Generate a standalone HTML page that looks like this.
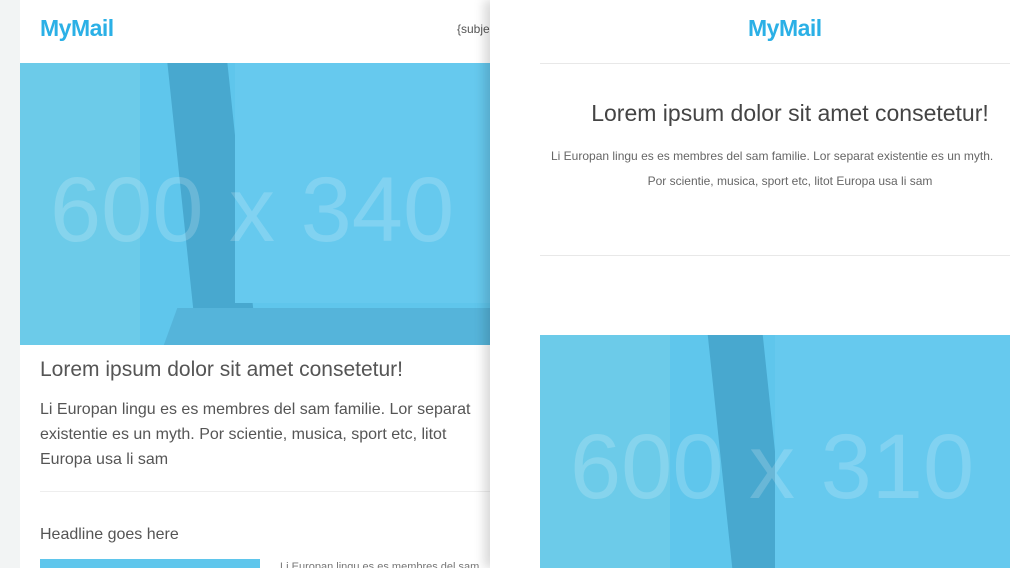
<!DOCTYPE html>
<html><head><meta charset="utf-8"><style>
*{margin:0;padding:0;box-sizing:border-box}
html,body{width:1010px;height:568px;overflow:hidden}
body{background:#f2f4f4;font-family:"Liberation Sans",sans-serif;position:relative}
.abs{position:absolute}
.logo{font-weight:bold;color:#2bb0e6;font-size:23px;letter-spacing:-0.5px}
.img{background:#5fc6ec;overflow:hidden}
.big{color:rgba(255,255,255,0.18);font-size:92px;white-space:nowrap}
</style></head><body>
<div class="abs" style="left:20px;top:0;width:470px;height:568px;background:#fff;overflow:hidden">
<div class="abs logo" style="left:20px;top:15px">MyMail</div>
<div class="abs" style="left:437px;top:22px;font-size:12px;color:#555">{subject}</div>
<div class="abs img" style="left:0;top:63px;width:470px;height:282px">
 <div class="abs" style="left:160px;top:-10px;width:60px;height:260px;background:#48a8cf;transform:skewX(6deg)"></div>
 <div class="abs" style="left:215px;top:0;width:260px;height:240px;background:#66c9ee"></div>
 <div class="abs" style="left:150px;top:245px;width:340px;height:40px;background:#55b4da;transform:skewX(-20deg)"></div>
 <div class="abs" style="left:0;top:0;width:120px;height:282px;background:#6ccbe9"></div>
 <div class="abs big" style="left:30px;top:95px">600 x 340</div>
</div>
<div class="abs" style="left:20px;top:358px;font-size:21px;color:#555;white-space:nowrap">Lorem ipsum dolor sit amet consetetur!</div>
<div class="abs" style="left:20px;top:397px;width:460px;font-size:16px;line-height:25px;color:#555">Li Europan lingu es es membres del sam familie. Lor separat existentie es un myth. Por scientie, musica, sport etc, litot Europa usa li sam</div>
<div class="abs" style="left:20px;top:491px;width:450px;height:1px;background:#eee"></div>
<div class="abs" style="left:20px;top:526px;font-size:16px;color:#555">Headline goes here</div>
<div class="abs img" style="left:20px;top:559px;width:220px;height:9px"></div>
<div class="abs" style="left:260px;top:561px;font-size:11px;color:#777;white-space:nowrap">Li Europan lingu es es membres del sam</div>
</div>

<div class="abs" style="left:490px;top:0;width:520px;height:568px;background:#fff;box-shadow:-6px 0 10px rgba(0,0,0,0.15);overflow:hidden">
<div class="abs logo" style="left:258px;top:15px">MyMail</div>
<div class="abs" style="left:50px;top:63px;width:470px;height:1px;background:#e8e8e8"></div>
<div class="abs" style="left:50px;top:100px;width:500px;text-align:center;font-size:23px;color:#444;white-space:nowrap">Lorem ipsum dolor sit amet consetetur!</div>
<div class="abs" style="left:61px;top:149px;font-size:12px;color:#666;white-space:nowrap">Li Europan lingu es es membres del sam familie. Lor separat existentie es un myth.</div>
<div class="abs" style="left:50px;top:174px;width:500px;text-align:center;font-size:12px;color:#666">Por scientie, musica, sport etc, litot Europa usa li sam</div>
<div class="abs" style="left:50px;top:255px;width:470px;height:1px;background:#e8e8e8"></div>
<div class="abs img" style="left:50px;top:335px;width:470px;height:233px">
 <div class="abs" style="left:180px;top:0;width:55px;height:233px;background:#48a8cf;transform:skewX(6deg)"></div>
 <div class="abs" style="left:235px;top:0;width:240px;height:233px;background:#66c9ee"></div>
 <div class="abs" style="left:0;top:0;width:130px;height:233px;background:#6ccbe9"></div>
 <div class="abs big" style="left:30px;top:80px">600 x 310</div>
</div>
</div>
</body></html>
